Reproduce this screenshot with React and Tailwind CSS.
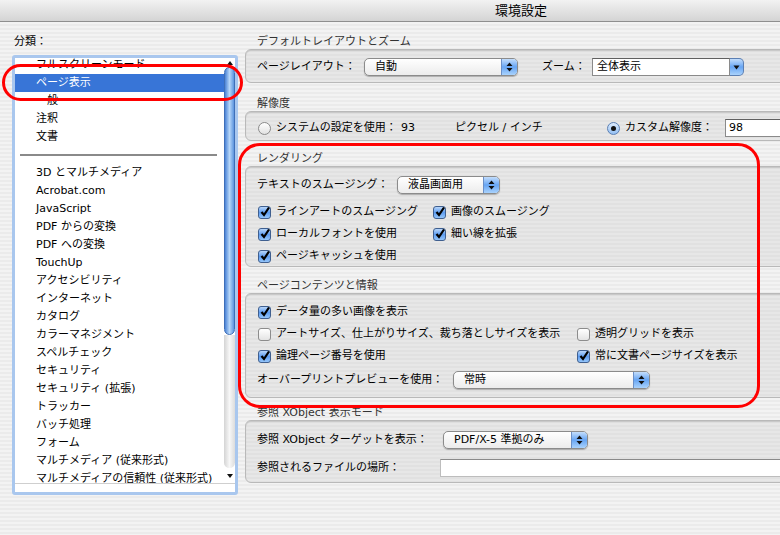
import React from 'react';

const listItems = [
    'フルスクリーンモード',
    'ページ表示',
    '一般',
    '注釈',
    '文書',
    '---',
    '3D とマルチメディア',
    'Acrobat.com',
    'JavaScript',
    'PDF からの変換',
    'PDF への変換',
    'TouchUp',
    'アクセシビリティ',
    'インターネット',
    'カタログ',
    'カラーマネジメント',
    'スペルチェック',
    'セキュリティ',
    'セキュリティ (拡張)',
    'トラッカー',
    'バッチ処理',
    'フォーム',
    'マルチメディア (従来形式)',
    'マルチメディアの信頼性 (従来形式)',
];

const groupBox =
    'rounded-[6px] border border-[#b9b9b9] bg-[repeating-linear-gradient(180deg,#e1e1e1_0px,#e1e1e1_2px,#e7e7e7_2px,#e7e7e7_4px)] shadow-[inset_0_1px_1px_rgba(0,0,0,0.12)]';

const UpDown = () => (
    <svg width="7" height="10" viewBox="0 0 7 10">
        <path d="M0.5 4 L3.5 0.5 L6.5 4 Z M0.5 6 L3.5 9.5 L6.5 6 Z" fill="#111" />
    </svg>
);

const Down = () => (
    <svg width="7" height="5" viewBox="0 0 7 5">
        <path d="M0.5 0.5 L3.5 4.5 L6.5 0.5 Z" fill="#111" />
    </svg>
);

const PopUp = ({ width, text }) => (
    <div className={`flex h-[18px] shrink-0 overflow-hidden rounded-[5px] border border-[#8b8b8b] bg-linear-to-b from-white to-[#ececec] shadow-[0_1px_1px_rgba(0,0,0,0.25)] ${width}`}>
        <div className="flex-1 pl-[10px] leading-[16px]">{text}</div>
        <div className="flex w-[16px] items-center justify-center border-l border-[#6b8fc6] bg-linear-to-b from-[#c3ddfb] via-[#67a5f3] to-[#a9d2fc]">
            <UpDown />
        </div>
    </div>
);

const Check = ({ on }) =>
    on ? (
        <span className="flex h-[13px] w-[13px] shrink-0 items-center justify-center rounded-[3px] border border-[#3f5f8f] bg-linear-to-b from-[#b8d6fa] via-[#5d9cf0] to-[#94c5fa]">
            <svg width="10" height="10" viewBox="0 0 10 10">
                <path d="M1.5 5 L4 8 L9 0.5" fill="none" stroke="#000" strokeWidth="2.2" />
            </svg>
        </span>
    ) : (
        <span className="h-[13px] w-[13px] shrink-0 rounded-[3px] border border-[#8c8c8c] bg-linear-to-b from-white to-[#e4e4e4]" />
    );

const CheckItem = ({ on, label, width }) => (
    <div className={`flex items-center gap-[5px] ${width || ''}`}>
        <Check on={on} />
        <span>{label}</span>
    </div>
);

const Radio = ({ on }) =>
    on ? (
        <span className="flex h-[13px] w-[13px] shrink-0 items-center justify-center rounded-full border border-[#5b7fb3] bg-linear-to-b from-[#dbeafc] to-[#93bff3]">
            <span className="h-[5px] w-[5px] rounded-full bg-[#111]" />
        </span>
    ) : (
        <span className="h-[13px] w-[13px] shrink-0 rounded-full border border-[#8a8a8a] bg-linear-to-b from-white to-[#e2e2e2]" />
    );

const Heading = ({ className, children }) => (
    <div className={`h-[15px] pl-[12px] leading-[15px] text-[#333] ${className}`}>{children}</div>
);

export default function App() {
    return (
        <div className="relative h-[535px] w-[780px] overflow-hidden bg-[repeating-linear-gradient(180deg,#ebebeb_0px,#ebebeb_2px,#f3f3f3_2px,#f3f3f3_4px)] font-['DejaVu_Sans','Noto_Sans_CJK_JP',sans-serif] text-[11px] text-black">
            {/* Title bar */}
            <div className="h-[22px] border-b border-[#8f8f8f] bg-linear-to-b from-[#f2f2f2] to-[#d4d4d4]">
                <div className="w-[1042px] text-center text-[13px] leading-[21px]">環境設定</div>
            </div>

            <div className="flex">
                {/* Category list */}
                <div className="w-[245px] shrink-0 pl-[12px]">
                    <div className="mt-[13px] h-[14px] pl-[2px] leading-[14px]">分類：</div>
                    <div className="mt-[6px] flex h-[440px] w-[226px] flex-col rounded-[3px] border-[3px] border-[#a9c7ee] bg-white">
                        <div className="flex h-[425px]">
                            <div className="relative flex-1 overflow-hidden">
                                <div className="-mt-[2px]">
                                    {listItems.map((item, i) =>
                                        item === '---' ? (
                                            <div key={i} className="flex h-[18px] items-center">
                                                <div className="ml-[5px] h-[2px] w-[197px] bg-[#8a8a8a]" />
                                            </div>
                                        ) : (
                                            <div
                                                key={i}
                                                className={`h-[18px] whitespace-nowrap pl-[21px] leading-[18px] ${i === 1 ? 'bg-[#3875d7] text-white' : ''}`}
                                            >
                                                {item}
                                            </div>
                                        )
                                    )}
                                </div>
                            </div>
                            {/* Scrollbar */}
                            <div className="flex w-[11px] flex-col">
                                <div className="flex h-[9px] items-center justify-center">
                                    <svg width="6" height="4" viewBox="0 0 6 4">
                                        <path d="M0 4 L3 0 L6 4 Z" fill="#111" />
                                    </svg>
                                </div>
                                <div className="h-[268px] rounded-full border border-[#3f6fb8] bg-linear-to-r from-[#4b83d6] via-[#b6d6f8] to-[#5c94de]" />
                                <div className="flex-1 rounded-b-full bg-linear-to-r from-[#d4d4d4] via-[#f7f7f7] to-[#dcdcdc]" />
                                <div className="flex h-[15px] items-center justify-center">
                                    <svg width="6" height="4" viewBox="0 0 6 4">
                                        <path d="M0 0 L3 4 L6 0 Z" fill="#111" />
                                    </svg>
                                </div>
                            </div>
                        </div>
                        <div className="h-[9px] border-t border-[#cfcfcf]" />
                    </div>
                </div>

                {/* Settings */}
                <div className="w-[560px] shrink-0">
                    <Heading className="mt-[12px]">デフォルトレイアウトとズーム</Heading>
                    <div className={`h-[34px] pt-[8px] ${groupBox}`}>
                        <div className="flex h-[18px] items-center pl-[11px]">
                            <span className="w-[107px] shrink-0">ページレイアウト：</span>
                            <PopUp width="w-[154px]" text="自動" />
                            <span className="ml-[24px] w-[50px] shrink-0">ズーム：</span>
                            <div className="flex h-[18px] w-[152px] shrink-0">
                                <div className="flex-1 border border-[#8a8a8a] border-t-[#606060] bg-white pl-[4px] leading-[16px]">全体表示</div>
                                <div className="flex w-[14px] items-center justify-center rounded-r-[5px] border border-l-0 border-[#5b7fb3] bg-linear-to-b from-[#c3ddfb] via-[#67a5f3] to-[#a9d2fc]">
                                    <Down />
                                </div>
                            </div>
                        </div>
                    </div>

                    <Heading className="mt-[13px]">解像度</Heading>
                    <div className={`h-[30px] pt-[7px] ${groupBox}`}>
                        <div className="flex h-[18px] items-center pl-[12px]">
                            <Radio />
                            <span className="ml-[5px] w-[125px] shrink-0">システムの設定を使用：</span>
                            <span className="w-[54px] shrink-0">93</span>
                            <span className="w-[152px] shrink-0">ピクセル / インチ</span>
                            <Radio on />
                            <span className="ml-[5px] w-[100px] shrink-0">カスタム解像度：</span>
                            <div className="h-[18px] w-[80px] shrink-0 border border-[#8a8a8a] border-t-[#606060] bg-white pl-[3px] leading-[16px]">98</div>
                        </div>
                    </div>

                    <Heading className="mt-[10px]">レンダリング</Heading>
                    <div className={`h-[101px] pt-[9px] ${groupBox}`}>
                        <div className="flex h-[18px] items-center pl-[11px]">
                            <span className="w-[140px] shrink-0">テキストのスムージング：</span>
                            <PopUp width="w-[103px]" text="液晶画面用" />
                        </div>
                        <div className="mt-[7px] pl-[12px]">
                            <div className="flex h-[22px] items-center">
                                <CheckItem on width="w-[175px]" label="ラインアートのスムージング" />
                                <CheckItem on label="画像のスムージング" />
                            </div>
                            <div className="flex h-[22px] items-center">
                                <CheckItem on width="w-[175px]" label="ローカルフォントを使用" />
                                <CheckItem on label="細い線を拡張" />
                            </div>
                            <div className="flex h-[22px] items-center">
                                <CheckItem on label="ページキャッシュを使用" />
                            </div>
                        </div>
                    </div>

                    <Heading className="mt-[11px]">ページコンテンツと情報</Heading>
                    <div className={`h-[105px] pt-[7px] ${groupBox}`}>
                        <div className="pl-[12px]">
                            <div className="flex h-[22px] items-center">
                                <CheckItem on label="データ量の多い画像を表示" />
                            </div>
                            <div className="flex h-[22px] items-center">
                                <CheckItem width="w-[319px]" label="アートサイズ、仕上がりサイズ、裁ち落としサイズを表示" />
                                <CheckItem label="透明グリッドを表示" />
                            </div>
                            <div className="flex h-[22px] items-center">
                                <CheckItem on width="w-[319px]" label="論理ページ番号を使用" />
                                <CheckItem on label="常に文書ページサイズを表示" />
                            </div>
                        </div>
                        <div className="mt-[4px] flex h-[18px] items-center pl-[11px]">
                            <span className="w-[196px] shrink-0">オーバープリントプレビューを使用：</span>
                            <PopUp width="w-[197px]" text="常時" />
                        </div>
                    </div>

                    <Heading className="mt-[7px]">参照 XObject 表示モード</Heading>
                    <div className={`h-[63px] pt-[10px] ${groupBox}`}>
                        <div className="flex h-[18px] items-center pl-[11px]">
                            <span className="w-[186px] shrink-0">参照 XObject ターゲットを表示：</span>
                            <PopUp width="w-[145px]" text="PDF/X-5 準拠のみ" />
                        </div>
                        <div className="mt-[10px] flex h-[18px] items-center pl-[11px]">
                            <span className="w-[183px] shrink-0">参照されるファイルの場所：</span>
                            <div className="h-[18px] flex-1 border border-[#bdbdbd] border-t-[#8a8a8a] bg-white" />
                        </div>
                    </div>
                </div>
            </div>

            {/* Red annotation marks */}
            <div className="pointer-events-none absolute left-[2px] top-[64px] h-[37px] w-[241px] rounded-full border-[3px] border-[#f00]" />
            <div className="pointer-events-none absolute left-[238px] top-[143px] h-[265px] w-[522px] rounded-[22px] border-[3px] border-[#f00]" />
        </div>
    );
}
